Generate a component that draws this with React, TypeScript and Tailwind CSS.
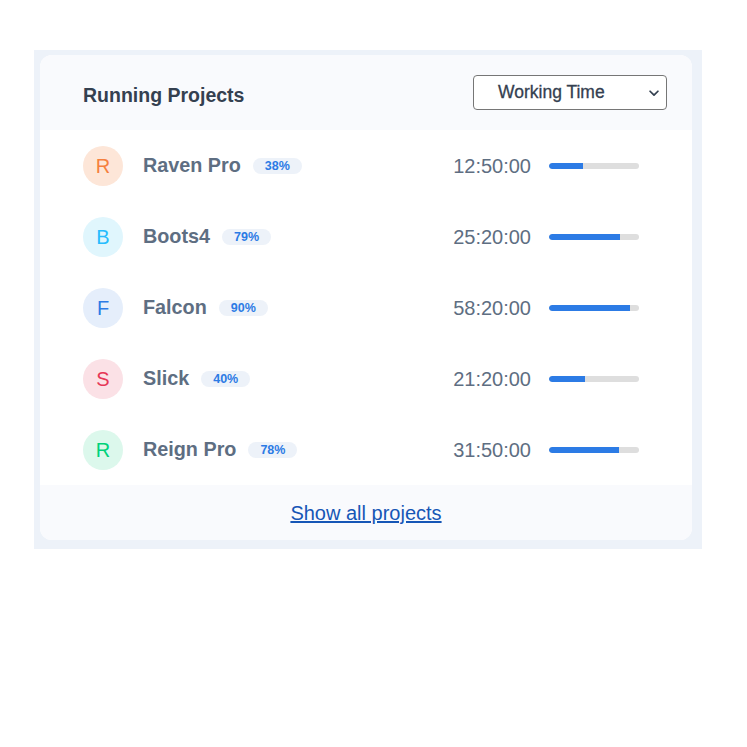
import React from 'react';

interface Project {
  initial: string;
  name: string;
  percent: number;
  time: string;
  circleBg: string;
  circleText: string;
}

const projects: Project[] = [
  { initial: 'R', name: 'Raven Pro', percent: 38, time: '12:50:00', circleBg: 'bg-[#fde6d8]', circleText: 'text-[#f5803e]' },
  { initial: 'B', name: 'Boots4', percent: 79, time: '25:20:00', circleBg: 'bg-[#e0f6fd]', circleText: 'text-[#27bcfd]' },
  { initial: 'F', name: 'Falcon', percent: 90, time: '58:20:00', circleBg: 'bg-[#e5eefb]', circleText: 'text-[#2c7be5]' },
  { initial: 'S', name: 'Slick', percent: 40, time: '21:20:00', circleBg: 'bg-[#fbe1e6]', circleText: 'text-[#e63757]' },
  { initial: 'R', name: 'Reign Pro', percent: 78, time: '31:50:00', circleBg: 'bg-[#dcf8ec]', circleText: 'text-[#00d27a]' },
];

const ProjectRow: React.FC<{ project: Project }> = ({ project }) => (
  <div className="h-[71px] flex items-center pl-[43px] pr-[53px]">
    <div className={`w-10 h-10 rounded-full flex items-center justify-center text-[20px] ${project.circleBg} ${project.circleText}`}>
      {project.initial}
    </div>
    <span className="ml-5 text-[19.8px] font-bold text-[#5e6e82]">{project.name}</span>
    <span className="ml-[12px] h-4 px-[12px] rounded-full bg-[#edf2f9] text-[#2c7be5] text-[12.5px] font-bold leading-4 [font-family:'Liberation_Sans_Narrow','Liberation_Sans',sans-serif]">
      {project.percent}%
    </span>
    <span className="ml-auto text-[20px] text-[#5e6e82]">{project.time}</span>
    <div className="ml-[18px] w-[90px] h-[6px] rounded-full bg-[#dedede] overflow-hidden">
      <div className="h-full bg-[#2c7be5] rounded-l-full" style={{ width: `${project.percent}%` }} />
    </div>
  </div>
);

export default function App() {
  return (
    <div className="w-[747px] h-[747px] bg-white pt-[50px] pl-[34px] [font-family:'Liberation_Sans',Arial,sans-serif]">
      <div className="w-[668px] bg-[#edf2f9] pt-[5px] pl-[6px] pr-[10px] pb-[9px]">
        <div className="rounded-xl overflow-hidden bg-white">
          {/* Header */}
          <div className="h-[75px] bg-[#f9fafd] flex items-center justify-between pl-[43px] pr-[25px]">
            <h3 className="mt-[7px] text-[19.5px] font-bold text-[#344050]">Running Projects</h3>
            <div className="w-[194px] h-[35px] border border-[#767676] rounded flex items-center pl-[24px] pr-[5px] bg-white">
              <span className="text-[17.5px] text-[#344050] [-webkit-text-stroke:0.3px_#344050]">Working Time</span>
              <svg className="ml-auto" width="14" height="14" viewBox="0 0 16 16" fill="none">
                <path d="M3.5 6l4.5 4.5L12.5 6" stroke="#344050" strokeWidth="2" strokeLinecap="round" strokeLinejoin="round" />
              </svg>
            </div>
          </div>

          {/* Rows */}
          <div>
            {projects.map((p) => (
              <ProjectRow key={p.name} project={p} />
            ))}
          </div>

          {/* Footer */}
          <div className="h-[55px] bg-[#f9fafd] flex items-center justify-center pt-[1px]">
            <a href="#" className="text-[20px] text-[#1656b6] underline">Show all projects</a>
          </div>
        </div>
      </div>
    </div>
  );
}
